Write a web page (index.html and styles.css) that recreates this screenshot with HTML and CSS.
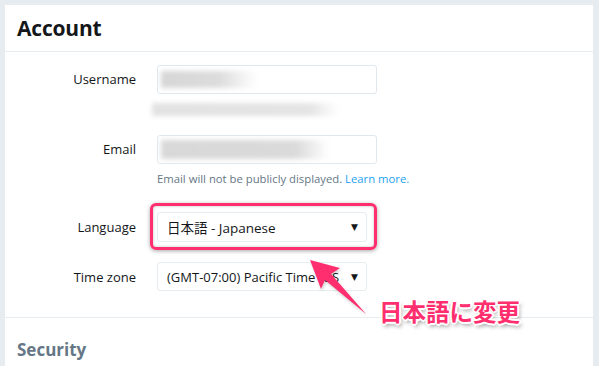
FILE: index.html
```html
<!DOCTYPE html>
<html lang="ja">
<head>
<meta charset="utf-8">
<title>Account</title>
<link rel="stylesheet" href="styles.css">
</head>
<body>
<div class="page">
  <section class="card">
    <header class="card-head">
      <h1 class="title">Account</h1>
    </header>
    <div class="form">
      <div class="row row-user">
        <label class="label">Username</label>
        <div class="control">
          <div class="input"><span class="blur blur-user"></span></div>
          <div class="hint"><span class="blur blur-url"></span></div>
        </div>
      </div>
      <div class="row row-email">
        <label class="label">Email</label>
        <div class="control">
          <div class="input"><span class="blur blur-email"></span></div>
          <div class="hint">Email will not be publicly displayed. <a class="link" href="#">Learn more.</a></div>
        </div>
      </div>
      <div class="row row-lang">
        <label class="label">Language</label>
        <div class="control">
          <div class="select-wrap">
            <div class="select"><span class="select-text">日本語 - Japanese</span><span class="caret">▼</span></div>
            <div class="highlight"></div>
          </div>
        </div>
      </div>
      <div class="row row-tz">
        <label class="label">Time zone</label>
        <div class="control">
          <div class="select"><span class="select-text">(GMT-07:00) Pacific Time (US</span><span class="caret">▼</span></div>
        </div>
      </div>
    </div>
    <header class="section-head">
      <h2 class="subtitle">Security</h2>
    </header>

    <svg class="arrow" width="80" height="70" viewBox="0 0 80 70" aria-hidden="true">
      <polygon class="arrow-shadow" points="11,12 41,20 32,26 67,66 26,32 22,41"/>
      <polygon class="arrow-body" points="10,10 40,18 31,24 66,64 25,30 21,39"/>
    </svg>
    <div class="note">日本語に変更</div>
  </section>
</div>
</body>
</html>
```

FILE: styles.css
```css
html, body {
  margin: 0;
  padding: 0;
  background: #e6ecf0;
}
body {
  font-family: "Open Sans", "Noto Sans", "Noto Sans CJK JP", sans-serif;
  color: #14171a;
}
.page {
  padding: 5px 0 0 5px;
  height: 361px;
  overflow: hidden;
}
.card {
  position: relative;
  width: 588px;
  height: 400px;
  background: #fff;
}
.card-head {
  border-bottom: 1px solid #e6ecf0;
  box-sizing: border-box;
  height: 47px;
  padding: 10px 12px 0;
}
.title {
  margin: 0;
  font-size: 21px;
  font-weight: 700;
  line-height: 26px;
  color: #14171a;
  letter-spacing: -0.2px;
}
.form {
  padding: 13px 0 25px;
  border-bottom: 1px solid #e6ecf0;
}
.row {
  display: grid;
  grid-template-columns: 131px 1fr;
  column-gap: 21px;
  align-items: start;
}
.label {
  text-align: right;
  font-size: 13px;
  line-height: 29px;
  color: #14171a;
}
.row-lang .label, .row-tz .label { line-height: 30px; }
.control {
  display: flex;
  flex-direction: column;
}
.input {
  width: 220px;
  height: 29px;
  box-sizing: border-box;
  border: 1px solid #e1e8ed;
  border-radius: 3px;
  padding: 5px 3px;
  overflow: hidden;
}
.blur {
  display: block;
  filter: blur(2.5px);
}
.blur-user {
  width: 96px; height: 17px;
  background: linear-gradient(90deg, #d6d6d6 0%, #dcdcdc 60%, rgba(230,230,230,0) 100%);
}
.blur-email {
  width: 168px; height: 19px; margin-top: -1px;
  background: linear-gradient(90deg, #d8d8d8 0%, #dadada 80%, rgba(230,230,230,0) 100%);
}
.hint {
  margin-top: 6px;
  height: 18px;
  font-size: 11.3px;
  line-height: 18px;
  color: #657786;
  white-space: nowrap;
}
.blur-url {
  width: 186px;
  height: 13px;
  margin: 3px 0 0 -5px;
  background: linear-gradient(90deg, #e2e2e2 0%, #e4e4e4 85%, rgba(240,240,240,0) 100%);
}
.link { color: #1da1f2; text-decoration: none; }
.row-email { margin-top: 17px; }
.row-lang { margin-top: 24px; }
.row-tz { margin-top: 20px; }
.select-wrap { position: relative; width: 210px; }
.select {
  width: 210px;
  height: 30px;
  box-sizing: border-box;
  border: 1px solid #e6ecf0;
  border-radius: 3px;
  padding: 0 8px 0 9px;
  display: flex;
  align-items: center;
  background: #fff;
}
.row-tz .select { height: 29px; }
.select-text {
  flex: 1;
  overflow: hidden;
  white-space: nowrap;
  font-size: 13px;
  color: #14171a;
  margin-right: 8px;
}
.row-lang .select-text { font-size: 13.5px; }
.caret {
  font-size: 9px;
  color: #14171a;
  font-family: "DejaVu Sans", sans-serif;
}
.highlight {
  position: absolute;
  left: -7px;
  top: -9px;
  width: 227px;
  height: 47px;
  box-sizing: border-box;
  border: 3px solid #ff2e6e;
  border-radius: 6px;
  box-shadow: 0 1px 4px rgba(0,0,0,0.35), inset 0 0 3px rgba(0,0,0,0.25);
}
.section-head {
  padding: 21px 12px 0;
}
.subtitle {
  margin: 0;
  font-size: 17px;
  font-weight: 700;
  line-height: 22px;
  color: #657786;
}
.arrow {
  position: absolute;
  left: 295px;
  top: 245px;
}
.arrow-body { fill: #ff2e6e; }
.arrow-shadow { fill: rgba(0,0,0,0.18); filter: blur(1.5px); }
.note {
  position: absolute;
  left: 374px;
  top: 295px;
  font-family: "Noto Sans CJK JP", sans-serif;
  font-weight: 700;
  font-size: 23.5px;
  line-height: 1;
  color: #ff2e6e;
  white-space: nowrap;
  text-shadow:
    -1px -1px 0 #fff, 1px -1px 0 #fff, -1px 1px 0 #fff, 1px 1px 0 #fff,
    0 -2px 0 #fff, 0 2px 0 #fff, -2px 0 0 #fff, 2px 0 0 #fff,
    2px 3px 4px rgba(0,0,0,0.45);
}
```
